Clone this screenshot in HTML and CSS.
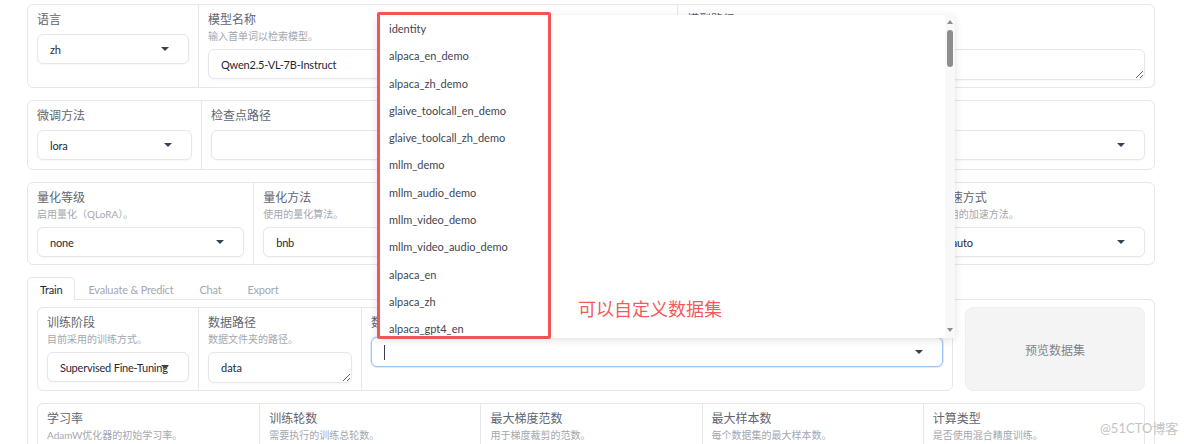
FILE: index.html
```html
<!DOCTYPE html>
<html lang="zh">
<head>
    <meta charset="UTF-8">
    <meta name="viewport" content="width=device-width, initial-scale=1.0">
    <title>LLaMA Board</title>
    <link rel="stylesheet" href="styles.css">
</head>
<body>
    <div class="page">
        <div class="card row-model">
            <div class="field">
                <label class="lbl">语言</label>
                <div class="select"><span>zh</span><i class="caret"></i></div>
            </div>
            <div class="field">
                <label class="lbl has-info">模型名称</label>
                <div class="info">输入首单词以检索模型。</div>
                <div class="select"><span>Qwen2.5-VL-7B-Instruct</span><i class="caret"></i></div>
            </div>
            <div class="field">
                <label class="lbl has-info">模型路径</label>
                <div class="info">本地模型的文件路径或 Hugging Face 的模型标识符。</div>
                <textarea class="textbox" rows="1">Qwen/Qwen2.5-VL-7B-Instruct</textarea>
            </div>
        </div>

        <div class="card row-tune">
            <div class="field">
                <label class="lbl">微调方法</label>
                <div class="select"><span>lora</span><i class="caret"></i></div>
            </div>
            <div class="field">
                <label class="lbl">检查点路径</label>
                <div class="select"><span></span><i class="caret"></i></div>
            </div>
        </div>

        <div class="card row-quant">
            <div class="field">
                <label class="lbl has-info">量化等级</label>
                <div class="info">启用量化（QLoRA）。</div>
                <div class="select"><span>none</span><i class="caret"></i></div>
            </div>
            <div class="field">
                <label class="lbl has-info">量化方法</label>
                <div class="info">使用的量化算法。</div>
                <div class="select"><span>bnb</span><i class="caret"></i></div>
            </div>
            <div class="field">
                <label class="lbl has-info">对话模板</label>
                <div class="info">构建提示词时使用的模板。</div>
                <div class="select"><span>qwen2_vl</span><i class="caret"></i></div>
            </div>
            <div class="field">
                <label class="lbl has-info">RoPE 插值方法</label>
                <div class="info">RoPE 缩放类型。</div>
                <div class="select"><span>none</span><i class="caret"></i></div>
            </div>
            <div class="field">
                <label class="lbl has-info">加速方式</label>
                <div class="info">使用的加速方法。</div>
                <div class="select"><span>auto</span><i class="caret"></i></div>
            </div>
        </div>

        <div class="tabs">
            <div class="tab-nav">
                <button class="tab active">Train</button>
                <button class="tab">Evaluate &amp; Predict</button>
                <button class="tab">Chat</button>
                <button class="tab">Export</button>
            </div>
            <div class="panel">
                <div class="data-row">
                    <div class="card data-card">
                        <div class="field">
                            <label class="lbl has-info">训练阶段</label>
                            <div class="info">目前采用的训练方式。</div>
                            <div class="select"><span>Supervised Fine-Tuning</span><i class="caret"></i></div>
                        </div>
                        <div class="field">
                            <label class="lbl has-info">数据路径</label>
                            <div class="info">数据文件夹的路径。</div>
                            <textarea class="textbox" rows="1">data</textarea>
                        </div>
                        <div class="field">
                            <label class="lbl">数据集</label>
                            <div class="select focus"><span><i class="cursor"></i></span><i class="caret"></i></div>
                        </div>
                    </div>
                    <button class="preview">预览数据集</button>
                </div>

                <div class="card row-hyper">
                    <div class="field">
                        <label class="lbl has-info">学习率</label>
                        <div class="info">AdamW优化器的初始学习率。</div>
                        <div class="select"><span>5e-5</span></div>
                    </div>
                    <div class="field">
                        <label class="lbl has-info">训练轮数</label>
                        <div class="info">需要执行的训练总轮数。</div>
                        <div class="select"><span>3.0</span></div>
                    </div>
                    <div class="field">
                        <label class="lbl has-info">最大梯度范数</label>
                        <div class="info">用于梯度裁剪的范数。</div>
                        <div class="select"><span>1.0</span></div>
                    </div>
                    <div class="field">
                        <label class="lbl has-info">最大样本数</label>
                        <div class="info">每个数据集的最大样本数。</div>
                        <div class="select"><span>100000</span></div>
                    </div>
                    <div class="field">
                        <label class="lbl has-info">计算类型</label>
                        <div class="info">是否使用混合精度训练。</div>
                        <div class="select"><span>bf16</span><i class="caret"></i></div>
                    </div>
                </div>
            </div>
        </div>
    </div>

    <!-- dataset dropdown, opened upwards over the form -->
    <div class="menu">
        <ul>
            <li>identity</li>
            <li>alpaca_en_demo</li>
            <li>alpaca_zh_demo</li>
            <li>glaive_toolcall_en_demo</li>
            <li>glaive_toolcall_zh_demo</li>
            <li>mllm_demo</li>
            <li>mllm_audio_demo</li>
            <li>mllm_video_demo</li>
            <li>mllm_video_audio_demo</li>
            <li>alpaca_en</li>
            <li>alpaca_zh</li>
            <li>alpaca_gpt4_en</li>
        </ul>
        <div class="scroll">
            <i class="arrow-up"></i>
            <i class="thumb"></i>
            <i class="arrow-down"></i>
        </div>
    </div>

    <div class="mark-box"></div>
    <div class="mark-text">可以自定义数据集</div>
    <div class="watermark">@51CTO博客</div>
</body>
</html>
```

FILE: styles.css
```css
* {
    box-sizing: border-box;
}

body {
    margin: 0;
    background: #fff;
    font-family: "Lato", "Noto Sans CJK SC", sans-serif;
    color: #1f2937;
}

.page {
    padding: 4px 29px 0 27px;
    display: flex;
    flex-direction: column;
    gap: 12px;
}

.card {
    display: grid;
    border: 1px solid #e5e7eb;
    border-radius: 6px;
    background: #fff;
}

.row-model {
    grid-template-columns: 170px 479px 1fr;
}

.row-tune {
    grid-template-columns: 173px 1fr;
}

.row-tune .field {
    padding-bottom: 9px;
}

.row-quant,
.row-hyper {
    grid-template-columns: repeat(5, 1fr);
}

.field {
    display: flex;
    flex-direction: column;
    padding: 8px 9px 7px;
    min-width: 0;
}

.field + .field {
    border-left: 1px solid #e5e7eb;
}

.lbl {
    font-size: 12px;
    line-height: 14px;
    color: #5f6670;
    margin-bottom: 7px;
}

.lbl.has-info {
    margin-bottom: 0;
}

.info {
    font-size: 10px;
    line-height: 14px;
    color: #a3a8b0;
    margin: 2px 0 6px;
    white-space: nowrap;
}

.select {
    display: flex;
    align-items: center;
    height: 30px;
    padding: 0 19px 0 12px;
    border: 1px solid #e5e7eb;
    border-radius: 6px;
    background: #fff;
    font-size: 11px;
    letter-spacing: -0.2px;
    color: #1f2937;
    box-shadow: 0 1px 2px rgba(0, 0, 0, 0.04);
}

.select span {
    flex: 1;
    min-width: 0;
    white-space: nowrap;
    display: flex;
    align-items: center;
}

.select.focus {
    border-color: #9cc6f7;
    box-shadow: 0 0 0 1px #dbeafe;
}

.cursor {
    width: 1px;
    height: 15px;
    background: #374151;
}

.caret {
    flex: none;
    width: 0;
    height: 0;
    border-left: 4px solid transparent;
    border-right: 4px solid transparent;
    border-top: 4px solid #374151;
}

.textbox {
    display: block;
    width: 100%;
    height: 31px;
    padding: 7px 12px;
    border: 1px solid #e5e7eb;
    border-radius: 6px;
    font-family: inherit;
    font-size: 11px;
    line-height: 15px;
    color: #1f2937;
    resize: vertical;
    overflow: hidden;
    box-shadow: 0 1px 2px rgba(0, 0, 0, 0.04);
}

/* tabs */
.tab-nav {
    display: flex;
    height: 22px;
}

.tab {
    padding: 1px 12px 0;
    border: 1px solid transparent;
    border-bottom: none;
    border-radius: 5px 5px 0 0;
    background: none;
    font-family: inherit;
    font-size: 11px;
    letter-spacing: -0.2px;
    line-height: 19px;
    color: #a3a8b0;
}

.tab.active {
    position: relative;
    z-index: 1;
    height: 23px;
    border-color: #e5e7eb;
    background: #fff;
    color: #1f2937;
}

.panel {
    display: flex;
    flex-direction: column;
    gap: 12px;
    padding: 7px 9px 9px;
    border: 1px solid #e5e7eb;
    border-radius: 0 6px 6px 6px;
}

.data-row {
    display: flex;
    gap: 12px;
}

.data-card {
    flex: 1;
    grid-template-columns: 160px 163px 1fr;
}

.preview {
    width: 180px;
    border: 1px solid #efefef;
    border-radius: 8px;
    background: #f4f4f5;
    font-family: inherit;
    font-size: 12px;
    color: #80848b;
}

/* dropdown list */
.menu {
    position: absolute;
    left: 377px;
    top: 15px;
    width: 578px;
    height: 323px;
    display: flex;
    overflow: hidden;
    background: #fff;
    border-radius: 2px;
    box-shadow: 0 2px 8px rgba(0, 0, 0, 0.12);
}

.menu ul {
    flex: 1;
    list-style: none;
    margin: 0;
    padding: 0;
}

.menu li {
    height: 27.3px;
    line-height: 28px;
    padding-left: 12px;
    font-size: 11px;
    color: #3f4652;
}

.scroll {
    width: 10px;
    display: flex;
    flex-direction: column;
    align-items: center;
    padding: 5px 0 6px;
    background: #f8f8f8;
}

.arrow-up {
    border-left: 3px solid transparent;
    border-right: 3px solid transparent;
    border-bottom: 4px solid #8d8d8d;
}

.thumb {
    width: 6px;
    height: 37px;
    margin-top: 6px;
    border-radius: 3px;
    background: #8d8d8d;
}

.arrow-down {
    margin-top: auto;
    border-left: 3px solid transparent;
    border-right: 3px solid transparent;
    border-top: 4px solid #8d8d8d;
}

/* annotation */
.mark-box {
    position: absolute;
    left: 377px;
    top: 12px;
    width: 174px;
    height: 327px;
    border: 3px solid #f25555;
    border-radius: 2px;
}

.mark-text {
    position: absolute;
    left: 578px;
    top: 297px;
    font-size: 18px;
    line-height: 24px;
    color: #f55a5a;
}

.watermark {
    position: absolute;
    left: 1100px;
    top: 420px;
    font-size: 13px;
    line-height: 16px;
    color: #c4c4c4;
}
```
